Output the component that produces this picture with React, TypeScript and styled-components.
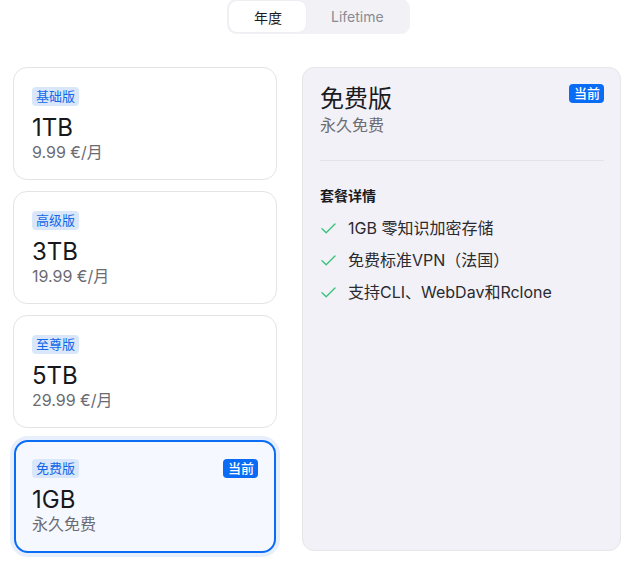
import styled, { createGlobalStyle } from 'styled-components'

const GlobalStyle = createGlobalStyle`
  body {
    margin: 0;
    background: #ffffff;
    font-family: Inter, "Noto Sans CJK SC", "Noto Sans", sans-serif;
    color: #1b1b1f;
  }
`

const Page = styled.div`
  width: 639px;
  height: 572px;
  box-sizing: border-box;
`

const TabRow = styled.div`
  display: flex;
  padding-left: 227px;
`

const Tabs = styled.div`
  display: flex;
  padding: 2px;
  background: #f2f2f6;
  border-radius: 9px;
  margin-top: -1px;
`

const Tab = styled.div<{ $active?: boolean }>`
  height: 31px;
  padding: 0 24px 0 25px;
  display: flex;
  align-items: center;
  justify-content: center;
  font-size: 14px;
  border-radius: 8px;
  background: ${(p) => (p.$active ? '#ffffff' : 'transparent')};
  color: ${(p) => (p.$active ? '#1b1b1f' : '#8a8a92')};
  box-shadow: ${(p) => (p.$active ? '0 0 2px rgba(0,0,0,0.06)' : 'none')};
`

const Main = styled.div`
  display: grid;
  grid-template-columns: 264px 319px;
  gap: 25px;
  padding: 33px 18px 0 13px;
`

const PlanList = styled.div`
  display: flex;
  flex-direction: column;
  gap: 11px;
`

const PlanCard = styled.div<{ $selected?: boolean }>`
  height: 113px;
  box-sizing: border-box;
  border-radius: 14px;
  padding: ${(p) => (p.$selected ? '17px 16px 0 16px' : '19px 18px 0 18px')};
  border: ${(p) => (p.$selected ? '2px solid #0b6cf4' : '1px solid #e3e3e8')};
  background: ${(p) => (p.$selected ? '#f5f8fe' : '#ffffff')};
  box-shadow: ${(p) => (p.$selected ? '0 0 0 4px #e7effc' : 'none')};
  ${(p) => (p.$selected ? 'margin: 1px 1px 0 1px;' : '')}
`

const CardTop = styled.div`
  display: flex;
  justify-content: space-between;
  align-items: center;
`

const Tier = styled.span`
  display: inline-block;
  font-size: 13px;
  line-height: 19px;
  padding: 0 4px;
  border-radius: 4px;
  background: #dae7fb;
  color: #1268e8;
`

const Current = styled.span`
  display: inline-block;
  font-size: 13px;
  line-height: 19px;
  padding: 0 4px 0 5px;
  border-radius: 4px;
  background: #0a6bf5;
  color: #ffffff;
  font-weight: 500;
`

const Size = styled.div`
  font-size: 24px;
  line-height: 26px;
  margin-top: 9px;
  color: #18181c;
`

const Price = styled.div`
  font-size: 16px;
  line-height: 22px;
  color: #6b6b73;
`

const Detail = styled.div`
  height: 484px;
  box-sizing: border-box;
  border: 1px solid #e5e5ea;
  border-radius: 12px;
  background: #f1f1f7;
  padding: 16px 16px 0 17px;
`

const DetailHead = styled.div`
  display: flex;
  justify-content: space-between;
  align-items: flex-start;
`

const DetailTitle = styled.div`
  font-size: 24px;
  line-height: 30px;
  color: #1b1b1f;
`

const DetailSub = styled.div`
  font-size: 16px;
  line-height: 22px;
  color: #6b6b73;
`

const Divider = styled.div`
  height: 1px;
  background: #e2e2e8;
  margin-top: 24px;
`

const SectionTitle = styled.div`
  font-size: 14px;
  font-weight: 700;
  line-height: 20px;
  margin-top: 25px;
  color: #1b1b1f;
`

const FeatureList = styled.div`
  display: flex;
  flex-direction: column;
  gap: 10px;
  margin-top: 11px;
`

const Feature = styled.div`
  display: flex;
  align-items: center;
  gap: 11px;
  font-size: 16px;
  line-height: 22px;
  color: #2a2a30;
`

const Check = () => (
  <svg width="17" height="17" viewBox="0 0 17 17" fill="none">
    <path d="M2 8.8 L6.2 12.8 L15 4" stroke="#3cc27c" strokeWidth="1.4" strokeLinecap="round" strokeLinejoin="round" />
  </svg>
)

const plans = [
  { tier: '基础版', size: '1TB', price: '9.99 €/月' },
  { tier: '高级版', size: '3TB', price: '19.99 €/月' },
  { tier: '至尊版', size: '5TB', price: '29.99 €/月' },
  { tier: '免费版', size: '1GB', price: '永久免费', current: true },
]

const features = ['1GB 零知识加密存储', '免费标准VPN（法国）', '支持CLI、WebDav和Rclone']

export default function App() {
  return (
    <Page>
      <GlobalStyle />
      <TabRow>
        <Tabs>
          <Tab $active>年度</Tab>
          <Tab>Lifetime</Tab>
        </Tabs>
      </TabRow>
      <Main>
        <PlanList>
          {plans.map((plan) => (
            <PlanCard key={plan.tier} $selected={plan.current}>
              <CardTop>
                <Tier>{plan.tier}</Tier>
                {plan.current && <Current>当前</Current>}
              </CardTop>
              <Size>{plan.size}</Size>
              <Price>{plan.price}</Price>
            </PlanCard>
          ))}
        </PlanList>
        <Detail>
          <DetailHead>
            <div>
              <DetailTitle>免费版</DetailTitle>
              <DetailSub>永久免费</DetailSub>
            </div>
            <Current>当前</Current>
          </DetailHead>
          <Divider />
          <SectionTitle>套餐详情</SectionTitle>
          <FeatureList>
            {features.map((f) => (
              <Feature key={f}>
                <Check />
                {f}
              </Feature>
            ))}
          </FeatureList>
        </Detail>
      </Main>
    </Page>
  )
}
